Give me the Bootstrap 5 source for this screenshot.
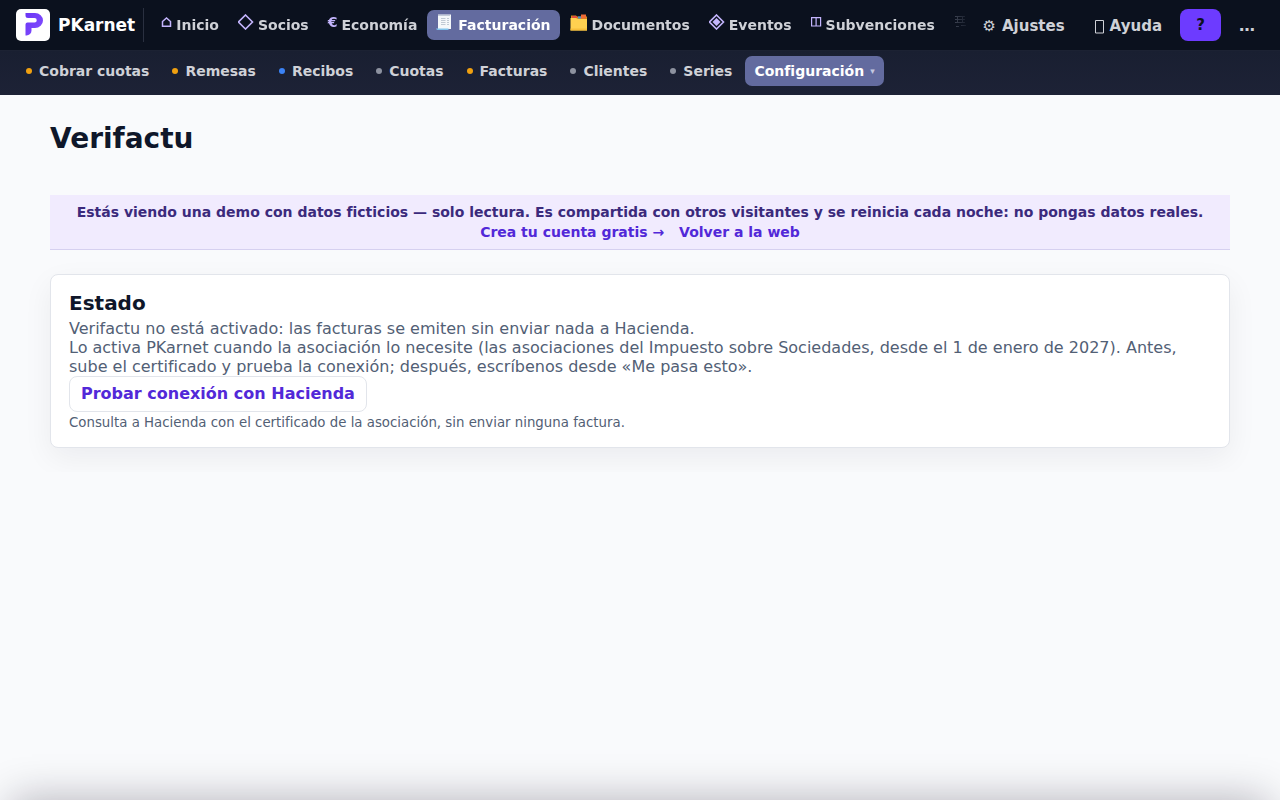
<!DOCTYPE html>
<html lang="es">
<head>
<meta charset="utf-8">
<meta name="viewport" content="width=device-width, initial-scale=1">
<title>Verifactu · PKarnet</title>
<link href="https://cdn.jsdelivr.net/npm/bootstrap@5.3.0/dist/css/bootstrap.min.css" rel="stylesheet">
<style>
  body { font-family: "DejaVu Sans", sans-serif; font-size: 16px; line-height: 19px; color: #0f172a; background: #f9fafc; }
  a { text-decoration: none; }
  .topbar { height: 51px; background: #0b111e; border-bottom: 1px solid #1c2233; padding: 0 16px; }
  .brand { color: #fff; font-size: 17px; font-weight: 700; gap: 8px; padding-right: 8px; height: 34px; border-right: 1px solid #2a3040; }
  .brand:hover { color: #fff; }
  .brand-logo { width: 34px; height: 32px; border-radius: 5px; background: #fff; }
  .main-menu { gap: 1px; padding-left: 8px; font-size: 14px; font-weight: 700; min-width: 0; overflow: hidden;
    -webkit-mask-image: linear-gradient(to right, #000 calc(100% - 32px), transparent calc(100% - 6px)); mask-image: linear-gradient(to right, #000 calc(100% - 32px), transparent calc(100% - 6px)); }
  .menu-item { height: 30px; padding: 0 9px; gap: 4px; border-radius: 7px; color: #cfd1d7; white-space: nowrap; }
  .menu-item.active, .sub-item.active { background: #636b9f; color: #fff; }
  .menu-icon { padding-bottom: 6px; color: #c4b5fd; line-height: 18px; }
  .menu-icon svg { display: block; }
  .tools { gap: 18px; padding-right: 9px; }
  .tool-link { font-size: 15px; font-weight: 700; color: #cfd1d7; gap: 6px; padding: 2px 6px 0; white-space: nowrap; }
  .help-btn { width: 41px; height: 32px; padding: 0; margin-left: -6px; border: 0; border-radius: 8px; background: #6d3bff; color: #0b111e; font-size: 15px; font-weight: 700; }
  .more-btn { border: 0; padding: 0; background: none; color: #cfd1d7; font-size: 16px; font-weight: 700; }
  .subbar { height: 44px; padding: 0 16px 4px; gap: 3px; background: linear-gradient(#191f31, #1d2236); font-size: 14px; font-weight: 700; }
  .sub-item { height: 30px; padding: 0 10px; gap: 7px; border-radius: 7px; color: #cfd1d7; font-weight: 700; white-space: nowrap; }
  .sub-item.active { padding: 0 9px; gap: 6px; }
  .bullet { width: 6px; height: 6px; border-radius: 50%; background: #8d92a0; }
  .bullet-warn { background: #f0a010; }
  .bullet-info { background: #3b82f6; }
  .caret-sign { font-size: 9px; color: #c5c8e0; }
  main { padding: 24px 50px; }
  h1 { font-size: 28px; line-height: 40px; font-weight: 700; margin: 0 0 36px; }
  .demo-note { background: #f1ebfe; border-bottom: 1px solid #d6d0f0; color: #3b2a7c; font-size: 14px; line-height: 20px; font-weight: 700; padding: 7px 16px; margin-bottom: 24px; }
  .demo-note a, .probe-btn { color: #5228d8; }
  .demo-note a + a { margin-left: 10px; }
  .state-card { border: 1px solid #e2e5eb; border-radius: 8px; padding: 16px 18px 13px; color: #526075; box-shadow: 0 10px 30px rgba(15,23,42,.06); }
  .state-card h2 { font-size: 20px; line-height: 24px; font-weight: 700; color: #0f172a; margin: 0 0 4px; }
  .state-card p { margin: 0; }
  .probe-btn { height: 36px; padding: 0 11px 1px; border: 1px solid #e2e5eb; border-radius: 8px; background: #fff; font-weight: 700; }
  .state-card .hint { font-size: smaller; line-height: 22px; }
  .bottom-sheet { position: fixed; top: 100%; left: 12px; right: 12px; height: 200px; box-shadow: 0 0 40px rgba(15,10,30,.3); }
</style>
</head>
<body>
<header>
  <div class="topbar d-flex align-items-center">
    <a class="brand d-flex align-items-center flex-shrink-0" href="#">
      <span class="brand-logo d-flex align-items-center justify-content-center">
        <svg width="34" height="32" viewBox="0 0 34 32" fill="none" aria-hidden="true"><defs><linearGradient id="lg" x1="0" y1="0" x2="1" y2="1"><stop stop-color="#6a35f5"/><stop offset="1" stop-color="#8450ff"/></linearGradient></defs><path d="M9.500 4H19a8 7.500 0 0 1 0 15H15.500V21.500a5 5 0 0 1-5 5H9.500V15.500a2 2 0 0 1 2-2H18.500a2 2 0 0 0 0-4.500H12a2.500 2.500 0 0 1-2.500-2.500Z" fill="url(#lg)"/></svg>
      </span>PKarnet</a>
    <nav class="main-menu d-flex align-items-center flex-grow-1" aria-label="Principal">
      <a class="menu-item d-flex align-items-center" href="#"><span class="menu-icon"><svg width="11" height="10" viewBox="0 0 11 10" fill="none" stroke="currentColor" stroke-width="1.500"><path d="M1.500 9.250V4.500L5.500 1l4 3.500v4.750Z"/></svg></span>Inicio</a>
      <a class="menu-item d-flex align-items-center" href="#"><span class="menu-icon"><svg width="16" height="16" viewBox="0 0 16 16" fill="none" stroke="currentColor" stroke-width="1.600"><path d="M7.500 1 14.500 8l-7 7-7-7Z"/></svg></span>Socios</a>
      <a class="menu-item d-flex align-items-center" href="#"><span class="menu-icon">€</span>Economía</a>
      <a class="menu-item active d-flex align-items-center" href="#" aria-current="page"><span class="menu-icon"><svg width="18" height="17" viewBox="0 0 18 17"><path d="M2 .5h13V15H2Z" fill="#f4f8fa"/><path d="M2 1l1 1 1-1 1 1 1-1 1 1 1-1 1 1 1-1 1 1 1-1 1 1 1-1" fill="none" stroke="#c3ccd8"/><path d="M5 4.500h4.500m1.500 0h2m-8 2h4.500m1.500 0h2m-8 2h4.500m1.500 0h2m-8 2h4.500m1.500 0h2" stroke="#c0cad4"/><path d="M0 14.500h12.500v1.500H2q-1.500 0-2-1.500Z" fill="#82c4ec"/></svg></span>Facturación</a>
      <a class="menu-item d-flex align-items-center" href="#"><span class="menu-icon"><svg width="18" height="17" viewBox="0 0 18 17"><path d="M1 1.500h5l1 1h10v6H1Z" fill="#d58b19"/><path d="M2 2h5v2H2Z" fill="#e34d3c"/><path d="M8 2.500h3v2H8Z" fill="#4a91d0"/><path d="M11 .5h5v4h-5Z" fill="#ed6b35"/><path d="M.5 4H6L8 5h9v11.500H.5Z" fill="#ffd050"/><path d="M.5 14.500h16.500v2H.5Z" fill="#f7be3b"/></svg></span>Documentos</a>
      <a class="menu-item d-flex align-items-center" href="#"><span class="menu-icon"><svg width="16" height="16" viewBox="0 0 16 16" fill="none" stroke="currentColor" stroke-width="1.600"><path d="M7.500 1 14.500 8l-7 7-7-7Z"/><path d="m7.500 4 4 4-4 4-4-4Z" fill="currentColor" stroke="none"/></svg></span>Eventos</a>
      <a class="menu-item d-flex align-items-center" href="#"><span class="menu-icon"><svg width="11" height="10" viewBox="0 0 11 10" fill="none" stroke="currentColor" stroke-width="1.200"><path d="M.6.600h9v8.400h-9ZM5.100.600v8.400"/></svg></span>Subvenciones</a>
      <a class="menu-item d-flex align-items-center" href="#" aria-label="Más"><span class="menu-icon"><svg width="18" height="16" viewBox="0 0 18 16" fill="none" stroke="#5a6070"><path d="M1 2.500h10M1 5.500h10M1 8.500h10M3.500 2v7M8.500 2v7M2 12.500h3m2-1h5"/></svg></span></a>
    </nav>
    <div class="tools d-flex align-items-center flex-shrink-0">
      <a class="tool-link d-flex align-items-center" href="#"><span>⚙</span>Ajustes</a>
      <a class="tool-link d-flex align-items-center" href="#"><svg width="9" height="15" viewBox="0 0 9 15" fill="none" stroke="currentColor"><path d="M.5 1.500h8v12.500h-8Z"/></svg>Ayuda</a>
      <button class="help-btn" type="button">?</button>
      <button class="more-btn" type="button" aria-label="Más opciones">…</button>
    </div>
  </div>
  <nav class="subbar d-flex align-items-center" aria-label="Facturación">
    <a class="sub-item d-flex align-items-center" href="#"><span class="bullet bullet-warn"></span>Cobrar cuotas</a>
    <a class="sub-item d-flex align-items-center" href="#"><span class="bullet bullet-warn"></span>Remesas</a>
    <a class="sub-item d-flex align-items-center" href="#"><span class="bullet bullet-info"></span>Recibos</a>
    <a class="sub-item d-flex align-items-center" href="#"><span class="bullet"></span>Cuotas</a>
    <a class="sub-item d-flex align-items-center" href="#"><span class="bullet bullet-warn"></span>Facturas</a>
    <a class="sub-item d-flex align-items-center" href="#"><span class="bullet"></span>Clientes</a>
    <a class="sub-item d-flex align-items-center" href="#"><span class="bullet"></span>Series</a>
    <button class="sub-item active d-flex align-items-center border-0" type="button">Configuración<span class="caret-sign">▾</span></button>
  </nav>
</header>
<main>
  <h1>Verifactu</h1>
  <div class="demo-note text-center">Estás viendo una demo con datos ficticios — solo lectura. Es compartida con otros visitantes y se reinicia cada noche: no pongas datos reales. <a href="#">Crea tu cuenta gratis →</a> <a href="#">Volver a la web</a></div>
  <section class="card state-card">
    <h2>Estado</h2>
    <p>Verifactu no está activado: las facturas se emiten sin enviar nada a Hacienda.</p>
    <p>Lo activa PKarnet cuando la asociación lo necesite (las asociaciones del Impuesto sobre Sociedades, desde el 1 de enero de 2027). Antes, sube el certificado y prueba la conexión; después, escríbenos desde «Me pasa esto».</p>
    <button class="probe-btn align-self-start" type="button">Probar conexión con Hacienda</button>
    <p class="hint">Consulta a Hacienda con el certificado de la asociación, sin enviar ninguna factura.</p>
  </section>
</main>
<div class="bottom-sheet" aria-hidden="true"></div>
<script src="https://cdn.jsdelivr.net/npm/bootstrap@5.3.0/dist/js/bootstrap.bundle.min.js"></script>
</body>
</html>
